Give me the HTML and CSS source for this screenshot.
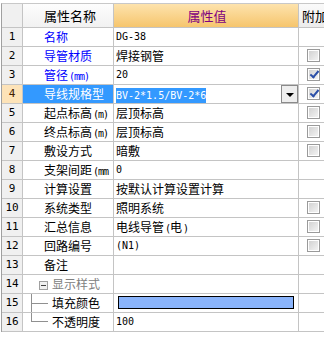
FILE: index.html
```html
<!DOCTYPE html>
<html lang="zh-CN">
<head>
    <meta charset="UTF-8">
    <title>属性</title>
    <link rel="stylesheet" href="styles.css">
</head>
<body>
<div class="grid">
    <div class="hd num"></div>
    <div class="hd name">属性名称</div>
    <div class="hd val">属性值</div>
    <div class="hd att">附加</div>

    <div class="num">1</div>
    <div class="name blue">名称</div>
    <div class="val mono">DG-38</div>
    <div class="att"></div>

    <div class="num">2</div>
    <div class="name blue">导管材质</div>
    <div class="val">焊接钢管</div>
    <div class="att"><span class="cb"></span></div>

    <div class="num">3</div>
    <div class="name blue">管径<span class="asc">(mm)</span></div>
    <div class="val mono">20</div>
    <div class="att"><span class="cb on"></span></div>

    <div class="num sel">4</div>
    <div class="name picked">导线规格型</div>
    <div class="val edit"><span class="mark mono">BV-2*1.5/BV-2*6</span><span class="drop"></span></div>
    <div class="att"><span class="cb on"></span></div>

    <div class="num">5</div>
    <div class="name">起点标高<span class="asc">(m)</span></div>
    <div class="val">层顶标高</div>
    <div class="att"><span class="cb"></span></div>

    <div class="num">6</div>
    <div class="name">终点标高<span class="asc">(m)</span></div>
    <div class="val">层顶标高</div>
    <div class="att"><span class="cb"></span></div>

    <div class="num">7</div>
    <div class="name">敷设方式</div>
    <div class="val">暗敷</div>
    <div class="att"><span class="cb"></span></div>

    <div class="num">8</div>
    <div class="name">支架间距<span class="asc">(mm</span></div>
    <div class="val mono">0</div>
    <div class="att"></div>

    <div class="num">9</div>
    <div class="name">计算设置</div>
    <div class="val">按默认计算设置计算</div>
    <div class="att"></div>

    <div class="num">10</div>
    <div class="name">系统类型</div>
    <div class="val">照明系统</div>
    <div class="att"><span class="cb"></span></div>

    <div class="num">11</div>
    <div class="name">汇总信息</div>
    <div class="val">电线导管<span class="asc">(</span>电<span class="asc">)</span></div>
    <div class="att"><span class="cb"></span></div>

    <div class="num">12</div>
    <div class="name">回路编号</div>
    <div class="val mono">(N1)</div>
    <div class="att"><span class="cb"></span></div>

    <div class="num">13</div>
    <div class="name">备注</div>
    <div class="val"></div>
    <div class="att"></div>

    <div class="num">14</div>
    <div class="name group"><span class="minus"></span>显示样式</div>
    <div class="val"></div>
    <div class="att"></div>

    <div class="num">15</div>
    <div class="name child"><span class="tree mid"></span>填充颜色</div>
    <div class="val"><span class="swatch"></span></div>
    <div class="att"></div>

    <div class="num">16</div>
    <div class="name child"><span class="tree end"></span>不透明度</div>
    <div class="val mono">100</div>
    <div class="att"></div>
</div>
</body>
</html>
```

FILE: styles.css
```css
html, body{
    margin: 0;
    background: #ffffff;
}
body{
    width: 324px;
    height: 339px;
    overflow: hidden;
    font: 12px/18px "Noto Sans CJK SC", "Liberation Sans", sans-serif;
    color: #000000;
}

.grid{
    display: grid;
    grid-template-columns: 21px 91px 185px 40px;
    grid-auto-rows: 19px;
    grid-template-rows: 24px;
    margin: 3px 0 0 1px;
    width: 337px;
    border-left: 1px solid #a0a0a0;
    border-top: 1px solid #c8c8c8;
}
.grid > div{
    box-sizing: border-box;
    border-right: 1px solid #c4c4c4;
    border-bottom: 1px solid #c4c4c4;
    white-space: nowrap;
    overflow: hidden;
    position: relative;
}

.hd{
    font-size: 13px;
    line-height: 23px;
}
.hd.num{
    background: #f0f0f0;
}
.hd.name{
    background: linear-gradient(#fdfdfd, #f1f1f1);
    padding-left: 21px;
}
.hd.val{
    background: linear-gradient(#fde3ad, #f6c56d);
    color: #800080;
    text-align: center;
}
.hd.att{
    background: linear-gradient(#fafafa, #ececec);
    padding-left: 3px;
}

.num{
    background: #f0f0f0;
    text-align: center;
    font-family: "DejaVu Sans Mono", monospace;
    font-size: 11px;
}
.num.sel{
    background: #fde3b8;
    color: #402000;
}
.name{
    padding-left: 21px;
}
.asc{
    font-family: "DejaVu Sans Mono", monospace;
    font-size: 10px;
    letter-spacing: -1px;
    margin-left: 1px;
}
.blue{
    color: #0000ff;
}
.picked{
    background: #3399ff;
    color: #ffffff;
}
.val{
    padding-left: 2px;
}
.mono{
    font-family: "DejaVu Sans Mono", monospace;
    font-size: 10px;
}
.edit .mark{
    background: #3399ff;
    color: #ffffff;
    padding: 2px 0;
}
.drop{
    position: absolute;
    left: 167px;
    top: 0;
    width: 15px;
    height: 16px;
    border: 1px solid #8a8a8a;
    background: #eeeeee;
}
.drop::after{
    content: "";
    position: absolute;
    left: 4px;
    top: 7px;
    border-left: 4px solid transparent;
    border-right: 4px solid transparent;
    border-top: 4px solid #000000;
}

.att{
    padding-left: 8px;
}
.cb{
    display: block;
    margin-top: 2px;
    width: 11px;
    height: 11px;
    border: 1px solid #9a9a9a;
    background: linear-gradient(135deg, #cfcfcf, #f6f6f6);
    box-shadow: inset 0 0 0 1px #ffffff;
    position: relative;
}
.cb.on::after{
    content: "";
    position: absolute;
    left: 4px;
    top: 0;
    width: 3px;
    height: 7px;
    border-right: 2px solid #2b4fa8;
    border-bottom: 2px solid #2b4fa8;
    transform: rotate(40deg);
}

.group{
    padding-left: 16px;
    color: #808080;
}
.minus{
    display: inline-block;
    vertical-align: -1px;
    width: 7px;
    height: 7px;
    border: 1px solid #a0a0a0;
    background: #f0f0f0;
    margin-right: 4px;
    position: relative;
}
.minus::after{
    content: "";
    position: absolute;
    left: 1px;
    top: 3px;
    width: 5px;
    height: 1px;
    background: #404040;
}
.child{
    padding-left: 29px;
}
.tree{
    position: absolute;
    left: 8px;
    top: 0;
    width: 16px;
    border-left: 1px solid #909090;
    border-bottom: 1px solid #909090;
}
.tree.mid{
    top: -1px;
    height: 10px;
}
.tree.mid::after{
    content: "";
    position: absolute;
    left: -1px;
    top: 10px;
    height: 10px;
    border-left: 1px solid #909090;
}
.tree.end{
    top: -1px;
    height: 9px;
}
.swatch{
    display: block;
    margin: 2px 0 0 2px;
    width: 174px;
    height: 11px;
    border: 1px solid #000000;
    background: #8ab4fb;
}
```
